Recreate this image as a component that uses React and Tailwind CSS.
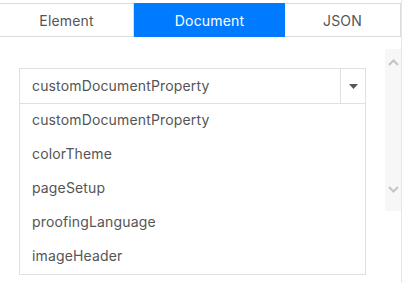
import React from 'react';

const tabs = ['Element', 'Document', 'JSON'];
const options = ['customDocumentProperty', 'colorTheme', 'pageSetup', 'proofingLanguage', 'imageHeader'];

const App = () => {
  return (
    <div className="w-[405px] h-[283px] bg-white overflow-hidden flex text-[#555] font-['Inter',sans-serif] text-[14px] tracking-[0.15px]">
      <div className="w-[402px] border-r border-[#e6e6e6] pt-[3px]">
        <div className="flex h-[34px] w-[401px] border-y border-r border-[#dcdcdc]">
          {tabs.map((tab, idx) => (
            <div
              key={tab}
              className={
                idx === 1
                  ? 'w-[151px] bg-[#007bff] text-white flex items-center justify-center -my-px'
                  : idx === 0
                  ? 'w-[134px] border-r border-[#dcdcdc] flex items-center justify-center'
                  : 'flex-1 flex items-center justify-center'
              }
            >
              {tab}
            </div>
          ))}
        </div>

        <div className="flex">
          <div className="w-[386px] pl-[19px] pt-[31px]">
            <div className="w-[347px]">
              <div className="flex h-[36px] border border-[#e0e0e0]">
                <div className="flex-1 flex items-center pl-[12px] pb-[2px]">customDocumentProperty</div>
                <div className="w-[25px] border-l border-[#e0e0e0] flex items-center justify-center">
                  <svg width="9" height="5" viewBox="0 0 9 5">
                    <path d="M0 0 L9 0 L4.5 5 Z" fill="#555" />
                  </svg>
                </div>
              </div>
              <div className="border-x border-b border-[#e0e0e0]">
                {options.map((opt) => (
                  <div key={opt} className="h-[34px] flex items-center pl-[12px] pb-[3px]">
                    {opt}
                  </div>
                ))}
              </div>
            </div>
          </div>
          <div className="mt-[12px] w-[16px] h-[162px] bg-[#f7f7f7] flex flex-col justify-between items-center pt-[10px] pb-[18px]">
            <svg width="11" height="7" viewBox="0 0 11 7">
              <polyline points="1,6 5.5,1.5 10,6" fill="none" stroke="#c4c4c4" strokeWidth="2" />
            </svg>
            <svg width="11" height="7" viewBox="0 0 11 7">
              <polyline points="1,1 5.5,5.5 10,1" fill="none" stroke="#c4c4c4" strokeWidth="2" />
            </svg>
          </div>
        </div>
      </div>
    </div>
  );
};

export default App;
